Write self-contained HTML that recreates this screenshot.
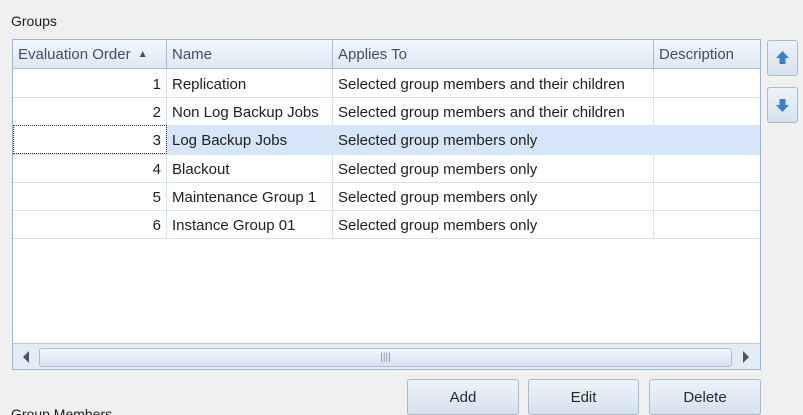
<!DOCTYPE html>
<html style="overflow:hidden;height:415px"><head><style>
body{margin:0;width:803px;height:415px;background:#f0f0f0;font-family:"Liberation Sans",sans-serif;font-size:15px;color:#1e1e1e;position:relative;overflow:hidden}
.a{position:absolute}
.grid{left:12px;top:39px;width:747px;height:329px;border:1px solid #9fb4cf;background:#fff;overflow:hidden}
.hdr{left:0;top:0;height:28px;width:747px;background:linear-gradient(#f4f8fd,#dde8f5);border-bottom:1px solid #a9bdd6}
.h{top:0;height:28px;line-height:30px;padding-left:5px;color:#3d4f66;border-right:1px solid #a9bdd6;box-sizing:border-box}
.row{left:0;width:747px;height:28px;border-bottom:1px solid #d5e1f0}
.c{top:0;height:28px;line-height:31px;padding-left:5px;border-right:1px solid #d5e1f0;box-sizing:border-box;white-space:nowrap;overflow:hidden}
.sel{background:#d6e5f7}
.btn{border:1px solid #aab9cc;border-radius:3px;background:linear-gradient(#eef3fa,#d6e1ef);box-sizing:border-box;text-align:center;color:#1e2a3a}
</style></head><body>
<div class="a" style="left:11px;top:13px;font-size:14px">Groups</div>
<div class="a grid">
 <div class="a hdr">
  <div class="a h" style="left:0;width:154px">Evaluation Order <span style="font-size:10px;position:relative;top:-2px;left:3px">▲</span></div>
  <div class="a h" style="left:154px;width:166px">Name</div>
  <div class="a h" style="left:320px;width:321px">Applies To</div>
  <div class="a h" style="left:641px;width:106px;border-right:none">Description</div>
 </div>
 <div class="a row" style="top:29px"><div class="a c" style="left:0;width:154px;text-align:right;padding-right:5px">1</div><div class="a c" style="left:154px;width:166px">Replication</div><div class="a c" style="left:320px;width:321px">Selected group members and their children</div></div>
 <div class="a row" style="top:57px"><div class="a c" style="left:0;width:154px;text-align:right;padding-right:5px">2</div><div class="a c" style="left:154px;width:166px">Non Log Backup Jobs</div><div class="a c" style="left:320px;width:321px">Selected group members and their children</div></div>
 <div class="a row sel" style="top:85px;height:29px"><div class="a c" style="left:0;width:154px;text-align:right;padding-right:5px;background:#fff;outline:1px dotted #333;outline-offset:-1px;height:29px;line-height:32px">3</div><div class="a c" style="left:154px;width:166px;line-height:32px">Log Backup Jobs</div><div class="a c" style="left:320px;width:321px;line-height:32px">Selected group members only</div></div>
 <div class="a row" style="top:114px"><div class="a c" style="left:0;width:154px;text-align:right;padding-right:5px">4</div><div class="a c" style="left:154px;width:166px">Blackout</div><div class="a c" style="left:320px;width:321px">Selected group members only</div></div>
 <div class="a row" style="top:142px"><div class="a c" style="left:0;width:154px;text-align:right;padding-right:5px">5</div><div class="a c" style="left:154px;width:166px">Maintenance Group 1</div><div class="a c" style="left:320px;width:321px">Selected group members only</div></div>
 <div class="a row" style="top:170px"><div class="a c" style="left:0;width:154px;text-align:right;padding-right:5px">6</div><div class="a c" style="left:154px;width:166px">Instance Group 01</div><div class="a c" style="left:320px;width:321px">Selected group members only</div></div>
 <div class="a" style="left:0;top:303px;width:747px;height:26px;background:#e3ebf5;border-top:1px solid #b9c9dd">
  <div class="a" style="left:10px;top:7px;width:0;height:0;border-top:6px solid transparent;border-bottom:6px solid transparent;border-right:6px solid #4a5464"></div>
  <div class="a" style="left:26px;top:4px;width:691px;height:17px;border:1px solid #a9bdd6;border-radius:3px;background:linear-gradient(#f2f6fb,#d7e2f0);text-align:center;font-size:10px;line-height:17px;color:#8090a8">||||</div>
  <div class="a" style="left:730px;top:7px;width:0;height:0;border-top:6px solid transparent;border-bottom:6px solid transparent;border-left:6px solid #4a5464"></div>
 </div>
</div>
<div class="a btn" style="left:767px;top:40px;width:31px;height:36px">
 <svg width="29" height="34" viewBox="0 0 29 34"><path d="M14.5 10 L21 17 H17.5 V23 H11.5 V17 H8 Z" fill="#3a7fd0"/></svg></div>
<div class="a btn" style="left:767px;top:87px;width:31px;height:36px">
 <svg width="29" height="34" viewBox="0 0 29 34"><path d="M14.5 24 L21 17 H17.5 V11 H11.5 V17 H8 Z" fill="#3a7fd0"/></svg></div>
<div class="a btn" style="left:407px;top:379px;width:112px;height:36px;line-height:36px">Add</div>
<div class="a btn" style="left:528px;top:379px;width:111px;height:36px;line-height:36px">Edit</div>
<div class="a btn" style="left:649px;top:379px;width:112px;height:36px;line-height:36px">Delete</div>
<div class="a" style="left:11px;top:406px;font-size:14px">Group Members</div>
</body></html>
